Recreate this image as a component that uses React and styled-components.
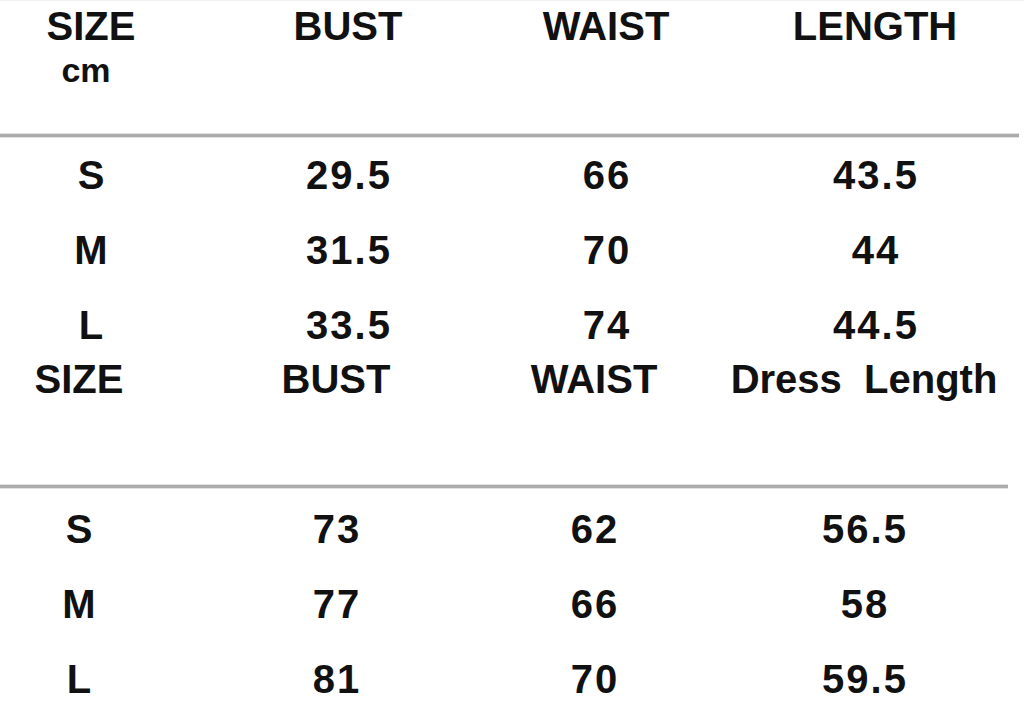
import React from "react";
import styled, { createGlobalStyle } from "styled-components";

const Global = createGlobalStyle`
  html, body { margin: 0; padding: 0; background: #fff; }
  body { font-family: "Liberation Sans", Arial, sans-serif; color: #111; }
`;

const Page = styled.div`
  width: 1024px;
  height: 703px;
  overflow: hidden;
  box-sizing: border-box;
  border-top: 1px solid #f0f0f0;
  background: #fff;
`;

const Row = styled.div`
  display: grid;
  grid-template-columns: ${(p) => p.$cols};
  justify-items: center;
  font-size: ${(p) => p.$size || 40}px;
  line-height: ${(p) => p.$lh}px;
  margin-top: ${(p) => p.$mt || 0}px;
  font-weight: 700;
  white-space: pre;
`;

const Cell = styled.div`
  letter-spacing: ${(p) => (p.$num ? "2px" : "0")};
  padding-left: ${(p) => (p.$num ? "2px" : "0")};
`;

const Unit = styled.div`
  padding-right: 10px;
`;

const Rule = styled.div`
  width: ${(p) => p.$w}px;
  height: 3px;
  margin-top: ${(p) => p.$mt}px;
  background: #acacac;
  box-shadow: 0 1px 0 #e2e2e2, 0 -1px 0 #e2e2e2;
`;

const COLS1 = "182px 332px 184px 354px";
const COLS2 = "158px 356px 160px 380px";

const block1 = [
  ["S", "29.5", "66", "43.5"],
  ["M", "31.5", "70", "44"],
  ["L", "33.5", "74", "44.5"],
];

const block2 = [
  ["S", "73", "62", "56.5"],
  ["M", "77", "66", "58"],
  ["L", "81", "70", "59.5"],
];

function DataRows({ rows, cols, mt }) {
  return rows.map((r, i) => (
    <Row key={r[0]} $cols={cols} $lh={75} $mt={i === 0 ? mt : 0}>
      <Cell>{r[0]}</Cell>
      <Cell $num>{r[1]}</Cell>
      <Cell $num>{r[2]}</Cell>
      <Cell $num>{r[3]}</Cell>
    </Row>
  ));
}

export default function App() {
  return (
    <>
      <Global />
      <Page>
        <Row $cols={COLS1} $lh={46} $mt={2}>
          <Cell>SIZE</Cell>
          <Cell>BUST</Cell>
          <Cell>WAIST</Cell>
          <Cell>LENGTH</Cell>
        </Row>
        <Row $cols={COLS1} $lh={36} $size={34} $mt={3}>
          <Unit>cm</Unit>
        </Row>
        <Rule $w={1019} $mt={46} />
        <DataRows rows={block1} cols={COLS1} mt={1} />
        <Row $cols={COLS2} $lh={32}>
          <Cell>SIZE</Cell>
          <Cell>BUST</Cell>
          <Cell>WAIST</Cell>
          <Cell>{"Dress  Length"}</Cell>
        </Row>
        <Rule $w={1008} $mt={90} />
        <DataRows rows={block2} cols={COLS2} mt={4} />
      </Page>
    </>
  );
}
